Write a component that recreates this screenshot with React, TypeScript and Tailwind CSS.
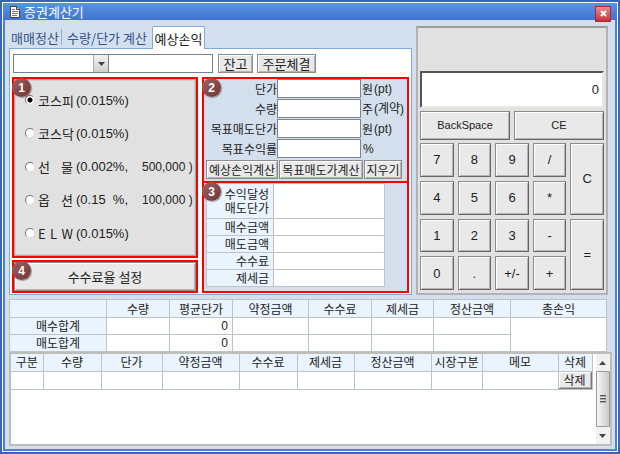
import React, { useState } from 'react';

const fees = [
    { id: 'kospi', name: ['코', '스', '피'], rate: '(0.015%)', amount: '' },
    { id: 'kosdaq', name: ['코', '스', '닥'], rate: '(0.015%)', amount: '' },
    { id: 'futures', name: ['선', '물'], rate: '(0.002%,', amount: '500,000 )' },
    { id: 'options', name: ['옵', '션'], rate: '(0.15  %,', amount: '100,000 )' },
    { id: 'elw', name: ['E', 'L', 'W'], rate: '(0.015%)', amount: '' },
];

const targets = [
    { id: 'price', label: '단가', unit: '원', note: '(pt)' },
    { id: 'count', label: '수량', unit: '주', note: '(계약)' },
    { id: 'targetPrice', label: '목표매도단가', unit: '원', note: '(pt)' },
    { id: 'targetRate', label: '목표수익률', unit: '', note: '%' },
];

const keys = [
    '7', '8', '9', '/', 'C',
    '4', '5', '6', '*',
    '1', '2', '3', '-', '=',
    '0', '.', '+/-', '+',
];

const summaryCols = [
    { label: '', width: 'w-[97px]' },
    { label: '수량', width: 'w-[63px]' },
    { label: '평균단가', width: 'w-[63px]' },
    { label: '약정금액', width: 'w-[76px]' },
    { label: '수수료', width: 'w-[63px]' },
    { label: '제세금', width: 'w-[62px]' },
    { label: '정산금액', width: 'w-[77px]' },
    { label: '총손익', width: 'w-[96px]' },
];

const logCols = [
    { label: '구분', width: 'w-[32px]' },
    { label: '수량', width: 'w-[58px]' },
    { label: '단가', width: 'w-[61px]' },
    { label: '약정금액', width: 'w-[77px]' },
    { label: '수수료', width: 'w-[58px]' },
    { label: '제세금', width: 'w-[57px]' },
    { label: '정산금액', width: 'w-[77px]' },
    { label: '시장구분', width: 'w-[51px]' },
    { label: '메모', width: 'w-[76px]' },
    { label: '삭제', width: 'w-[34px]' },
];

const latin = "font-[family-name:'Liberation_Sans','Noto_Sans_CJK_KR',sans-serif]";
const raised = 'border border-[#8c8c8c] bg-[#e9e9e9] shadow-[inset_1px_1px_0_#fff,inset_-1px_-1px_0_#b4b4b4]';
const cell = 'border border-[#bfc3c8] p-0';
const head = 'bg-[#eaf4fe] font-normal';

const Badge: React.FC<{ n: number }> = ({ n }) => (
    <span className="absolute -left-0.5 -top-px flex size-[19px] items-center justify-center rounded-full bg-gradient-to-br from-[#a06464] to-[#6e3434] font-[family-name:'Liberation_Sans',sans-serif] text-[12px] font-bold text-white shadow-[1px_1px_1px_rgba(0,0,0,0.35)]">
        {n}
    </span>
);

const FeePanel: React.FC = () => {
    const [market, setMarket] = useState('kospi');

    return (
        <div className="relative flex-1 border-2 border-[#f00]">
            <div className="flex h-full flex-col justify-between border border-[#a9a9a9] bg-[#e1e1e1] pt-2.5 pb-3 pl-2.5 shadow-[inset_0_0_0_1px_#d0d0d0]">
                {fees.map((fee) => (
                    <label key={fee.id} className="flex h-5 items-center">
                        <input
                            type="radio"
                            name="market"
                            checked={market === fee.id}
                            onChange={() => setMarket(fee.id)}
                            className="size-[10px] shrink-0 appearance-none rounded-full border border-[#777] border-r-[#ddd] border-b-[#ddd] bg-white checked:bg-[radial-gradient(circle,#000_0_2px,#fff_3px)]"
                        />
                        <span className="ml-[3px] flex w-[35px] justify-between">
                            {fee.name.map((ch) => <span key={ch}>{ch}</span>)}
                        </span>
                        <span className={`${latin} ml-[3px] w-[62px] text-[13px] whitespace-pre`}>{fee.rate}</span>
                        <span className={`${latin} ml-1 text-[12px] whitespace-pre`}>{fee.amount}</span>
                    </label>
                ))}
            </div>
            <Badge n={1} />
        </div>
    );
};

const TargetPanel: React.FC = () => (
    <div className="flex w-[207px] flex-col bg-[#d3dfec] text-[12px]">
        <div className="relative border-2 border-[#f00] pb-0.5">
            <div className="flex flex-col gap-px">
                {targets.map((t) => (
                    <div key={t.id} className="flex h-[19px] items-center">
                        <label htmlFor={t.id} className="w-[73px] text-right leading-none whitespace-nowrap">{t.label}</label>
                        <input id={t.id} type="text" className="h-[19px] w-[84px] border border-[#7f858c] bg-white px-1" />
                        <span className="flex items-center pl-px leading-none whitespace-nowrap">
                            {t.unit}
                            <span className={`${latin} pl-px`}>{t.note}</span>
                        </span>
                    </div>
                ))}
            </div>
            <div className="mt-0.5 flex gap-px pl-0.5 leading-none">
                <button className={`${raised} h-[19px] w-[72px] whitespace-nowrap`}>예상손익계산</button>
                <button className={`${raised} h-[19px] w-[84px] whitespace-nowrap`}>목표매도가계산</button>
                <button className={`${raised} h-[19px] w-[38px] whitespace-nowrap`}>지우기</button>
            </div>
            <Badge n={2} />
        </div>
        <div className="relative flex-1 border-2 border-t-0 border-[#f00] pl-0.5">
            <table className="w-[179px] table-fixed border-collapse bg-white leading-[14px]">
                <tbody>
                    <tr className="h-[35px]">
                        <th className={`${cell} ${head} w-[67px] pr-1 text-right`}>수익달성<br />매도단가</th>
                        <td className={cell} />
                    </tr>
                    {['매수금액', '매도금액', '수수료', '제세금'].map((label) => (
                        <tr key={label} className="h-[17px]">
                            <th className={`${cell} ${head} pr-1 text-right`}>{label}</th>
                            <td className={cell} />
                        </tr>
                    ))}
                </tbody>
            </table>
            <Badge n={3} />
        </div>
    </div>
);

const Calculator: React.FC = () => {
    const [value, setValue] = useState('0');

    const press = (key: string) => {
        if (key === 'C') setValue('0');
        else if (/^[0-9.]$/.test(key)) setValue(value === '0' && key !== '.' ? key : value + key);
    };

    return (
        <div className={`${latin} flex w-[192px] shrink-0 flex-col gap-[3px] border-2 border-[#b3b3b3] border-t-[#9c9c9c] bg-[#e1e1e1] px-0.5 pt-[43px] pb-[3px] text-[13px]`}>
            <input
                aria-label="result"
                readOnly
                value={value}
                className="h-[37px] w-full border-2 border-[#555] border-r-[#e8e8e0] border-b-[#e8e8e0] bg-white pr-[3px] text-right"
            />
            <div className="grid grid-cols-2 gap-1 text-[11px]">
                <button className={`${raised} h-[29px] border-r-[#666] border-b-[#666]`}>BackSpace</button>
                <button className={`${raised} h-[29px] border-r-[#666] border-b-[#666]`} onClick={() => setValue('0')}>CE</button>
            </div>
            <div className="grid h-[147px] grid-cols-5 grid-rows-4 gap-1">
                {keys.map((key) => (
                    <button
                        key={key}
                        onClick={() => press(key)}
                        className={`${raised} border-r-[#666] border-b-[#666] ${key === 'C' || key === '=' ? 'row-span-2' : ''}`}
                    >
                        {key}
                    </button>
                ))}
            </div>
        </div>
    );
};

const SummaryTable: React.FC = () => (
    <table className="w-full table-fixed border-collapse bg-white text-[12px] leading-none">
        <thead>
            <tr className="h-[18px]">
                {summaryCols.map((col) => (
                    <th key={col.label} className={`${cell} ${head} ${col.width}`}>{col.label}</th>
                ))}
            </tr>
        </thead>
        <tbody>
            {['매수합계', '매도합계'].map((label, i) => (
                <tr key={label} className="h-[17px]">
                    <th className={`${cell} ${head}`}>{label}</th>
                    <td className={cell} />
                    <td className={`${cell} ${latin} pr-1 text-right`}>0</td>
                    <td className={cell} />
                    <td className={cell} />
                    <td className={cell} />
                    <td className={cell} />
                    {i === 0 && <td rowSpan={2} className={cell} />}
                </tr>
            ))}
        </tbody>
    </table>
);

const TradeLog: React.FC = () => (
    <div className="flex flex-1 border-2 border-[#bdbdbd] bg-white">
        <div className="flex-1">
            <table className="w-full table-fixed border-collapse text-[12px] leading-none">
                <thead>
                    <tr className="h-[17px]">
                        {logCols.map((col) => (
                            <th key={col.label} className={`${cell} ${head} ${col.width} border-t-0 whitespace-nowrap first:border-l-0`}>{col.label}</th>
                        ))}
                    </tr>
                </thead>
                <tbody>
                    <tr className="h-[18px]">
                        {logCols.slice(1).map((col) => <td key={col.label} className={`${cell} first:border-l-0`} />)}
                        <td className={cell}>
                            <button className={`${raised} block h-[17px] w-full border-t-0 border-l-0 border-[#777]`}>삭제</button>
                        </td>
                    </tr>
                </tbody>
            </table>
        </div>
        <div className="ml-[3px] flex w-[15px] flex-col bg-[#f1f1f1]">
            <button aria-label="up" className="flex h-[17px] items-center justify-center">
                <svg width="7" height="4" viewBox="0 0 7 4"><path d="M3.5 0 7 4H0z" fill="#444" /></svg>
            </button>
            <button aria-label="scroll" className="flex h-14 items-center justify-center rounded-[1px] border border-[#999] bg-gradient-to-r from-[#f6f6f6] to-[#c9c9cb]">
                <svg width="6" height="8" viewBox="0 0 6 8"><path d="M0 .5h6M0 3.500h6M0 6.500h6" stroke="#555" /><path d="M0 1.500h6M0 4.500h6M0 7.500h6" stroke="#aaa" /></svg>
            </button>
            <button aria-label="down" className="mt-auto flex h-[17px] items-center justify-center">
                <svg width="7" height="4" viewBox="0 0 7 4"><path d="M0 0h7L3.5 4z" fill="#444" /></svg>
            </button>
        </div>
    </div>
);

const App: React.FC = () => (
    <div className="flex min-h-screen flex-col bg-[#3667bd] p-0.5 font-[family-name:'Noto_Sans_CJK_KR',sans-serif] text-[13px] leading-none text-[#222]">
        <div className="flex flex-1 flex-col border border-white bg-[#4a82d8]">
            <header className="flex h-[17px] items-center bg-gradient-to-b from-[#5a93e6] to-[#3f75cd] pr-1.5 pl-[7px] text-white">
                <svg width="10" height="12" viewBox="0 0 10 12">
                    <path d="M.5.5h6l3 3v8h-9z" fill="#fff" stroke="#444" />
                    <path d="M6.5.5v3h3" fill="#ccc" stroke="#444" />
                    <path d="M2 3.5h3M2 5.5h6M2 7.5h6M2 9.5h5" stroke="#777" />
                </svg>
                <h1 className="ml-1 whitespace-nowrap">증권계산기</h1>
                <button aria-label="close" className="relative mt-1 ml-auto flex size-4 items-center justify-center border border-[#a82a38] bg-gradient-to-b from-[#e08a90] to-[#c62c3c]">
                    <svg width="7" height="7" viewBox="0 0 7 7"><path d="M1 1l5 5M6 1 1 6" stroke="#fff" strokeWidth="2" /></svg>
                </button>
            </header>

            <main className="mx-0.5 mb-0.5 flex flex-1 flex-col bg-[#d3dfec] pt-1.5 pr-[3px] pb-[3px] pl-1">
                <div className="mr-1 flex gap-1">
                    <div className="flex flex-1 flex-col">
                        <nav className="flex h-[22px] items-center text-[#33538c]">
                            <button className="h-4 w-[53px] border-r border-[#8fb3d6] leading-none whitespace-nowrap">매매정산</button>
                            <button className="h-4 w-[90px] leading-none whitespace-nowrap">수량/단가 계산</button>
                            <button className="relative -mb-px h-[23px] w-[53px] rounded-t-[2px] border border-b-0 border-[#7fabd4] bg-white leading-none whitespace-nowrap text-[#222]">예상손익</button>
                        </nav>
                        <div className="flex flex-1 flex-col border border-[#7fabd4] bg-white px-0.5 pt-[5px] pb-px">
                            <div className="flex h-[19px] pl-px">
                                <div className="relative">
                                    <select aria-label="account" className="h-full w-24 appearance-none border border-[#7f7f7f] bg-white" />
                                    <span className="pointer-events-none absolute top-px right-px flex h-[17px] w-[15px] items-center justify-center border-l border-[#aaa] bg-gradient-to-b from-[#f2f2f2] to-[#cfcfcf]">
                                        <svg width="7" height="4" viewBox="0 0 7 4"><path d="M0 0h7L3.5 4z" fill="#444" /></svg>
                                    </span>
                                </div>
                                <input aria-label="name" type="text" className="-ml-px h-full w-[105px] border border-[#7f7f7f] bg-white px-1" />
                                <button className={`${raised} ml-[5px] w-[35px] whitespace-nowrap`}>잔고</button>
                                <button className={`${raised} ml-1 w-[59px] whitespace-nowrap`}>주문체결</button>
                            </div>
                            <div className="mt-1 flex flex-1 gap-1">
                                <div className="flex flex-1 flex-col gap-0.5">
                                    <FeePanel />
                                    <div className="relative h-[33px] border-2 border-[#f00]">
                                        <button className={`${raised} h-full w-full`}>수수료율 설정</button>
                                        <Badge n={4} />
                                    </div>
                                </div>
                                <TargetPanel />
                            </div>
                        </div>
                    </div>
                    <Calculator />
                </div>

                <div className="mt-1 mr-[5px]">
                    <SummaryTable />
                </div>
                <TradeLog />
            </main>
        </div>
    </div>
);

export default App;
